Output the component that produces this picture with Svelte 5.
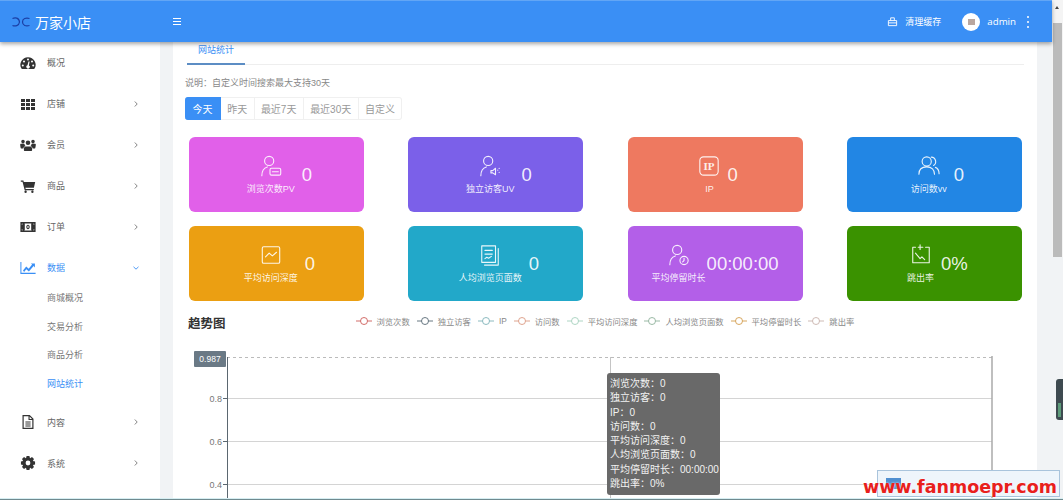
<script>
  const gear = () => {
    let d = '';
    const teeth = 8;
    for (let i = 0; i < teeth; i++) {
      const a = (i / teeth) * Math.PI * 2;
      const w = Math.PI / teeth;
      const pts = [
        [a - w * 0.95, 5.3],
        [a - w * 0.5, 7.2],
        [a + w * 0.5, 7.2],
        [a + w * 0.95, 5.3]
      ];
      for (const [t, r] of pts) {
        d += `${d ? 'L' : 'M'}${(8 + Math.cos(t) * r).toFixed(2)} ${(8 + Math.sin(t) * r).toFixed(2)}`;
      }
    }
    return d + 'zM8 5.6a2.4 2.4 0 1 0 0 4.8a2.4 2.4 0 0 0 0-4.8z';
  };

  const navIcons = {
    dash: 'M8 2.2a7.6 7.6 0 0 0-6.6 11.4c.2.3.4.4.7.4h11.8c.3 0 .5-.1.7-.4A7.6 7.6 0 0 0 8 2.2zM8 3.6a1 1 0 1 1 0 2a1 1 0 0 1 0-2zM4 5.6a1 1 0 1 1 0 2a1 1 0 0 1 0-2zM12 5.6a1 1 0 1 1 0 2a1 1 0 0 1 0-2zM2.8 9.4a1 1 0 1 1 0 2a1 1 0 0 1 0-2zM13.2 9.4a1 1 0 1 1 0 2a1 1 0 0 1 0-2zM9.6 6.6L8.9 10.4a1.7 1.7 0 1 1-1.4-.1L8.5 6.4z',
    grid: 'M1 3h4v3H1zM6 3h4v3H6zM11 3h4v3h-4zM1 7h4v3H1zM6 7h4v3H6zM11 7h4v3h-4zM1 11h4v3H1zM6 11h4v3H6zM11 11h4v3h-4z',
    users: 'M8 3.4a2.3 2.3 0 1 1 0 4.6a2.3 2.3 0 0 1 0-4.6zM3 2.8a1.8 1.8 0 1 1 0 3.6a1.8 1.8 0 0 1 0-3.6zM13 2.8a1.8 1.8 0 1 1 0 3.6a1.8 1.8 0 0 1 0-3.6zM.2 7.2C.2 6.8 1 6.8 3 6.8c.7 0 1.2.1 1.5.2c0 .9.4 1.6 1 2.1c-1.3.4-2 1.3-2.1 2.5H1.2C.6 11.6.2 9 .2 7.2zM15.8 7.2c0-.4-.8-.4-2.8-.4c-.7 0-1.2.1-1.5.2c0 .9-.4 1.6-1 2.1c1.3.4 2 1.3 2.1 2.5h2.2c.6 0 1-2.6 1-4.4zM5.8 9.4h4.4c1.2 0 1.9 1 1.9 2.6v1c0 .6-.4 1-1 1H4.900c-.6 0-1-.4-1-1v-1c0-1.600.7-2.600 1.900-2.600z',
    cart: 'M.8 2.6h2.600l.4 1.400h11.400l-1.300 5.800H5.400l.3 1.200h8.100v1.200H4.700L2.500 3.800H.8zM5.600 12.600a1.200 1.200 0 1 1 0 2.400a1.200 1.200 0 0 1 0-2.400zM12.400 12.600a1.200 1.200 0 1 1 0 2.400a1.200 1.200 0 0 1 0-2.400z',
    money: 'M.4 3h15.200v10H.4zM3 4.800H1.800v1.200M13 4.800h1.200V6M1.800 10v1.200H3M14.200 10v1.200H13zM4.200 4.600c.6 0 .6.500.6.900v5c0 .4 0 .9-.6.900h7.600c-.6 0-.6-.5-.6-.9v-5c0-.4 0-.9.6-.9zM8 5.800c1.100 0 1.700 1 1.700 2.200s-.6 2.200-1.700 2.200s-1.700-1-1.700-2.200s.6-2.200 1.700-2.200zM8 6.800c-.4 0-.6.500-.6 1.200s.2 1.200.6 1.200s.6-.5.6-1.200s-.2-1.200-.6-1.200z',
    chart: 'M.4 2h1v10.800h14.200v1.200H.4zM3 10.400l3.200-4l2.500 2.300l3.400-4.100l-1.300-1.200h4.100v4l-1.300-1.300l-4.700 5.500l-2.600-2.400l-2.200 2.700z',
    file: 'M2.500 1h7.200l3.800 3.800V15h-11zM3.700 2.200v11.600h8.600V6H8.500V2.200zM9.600 2.500v2.400H12zM5.400 7.600h5.200v1H5.400zM5.400 9.500h5.200v1H5.400zM5.400 11.400h5.200v1H5.400z',
    gear: gear()
  };

  const nav = [
    { label: '概况', icon: 'dash' },
    { label: '店铺', icon: 'grid', more: true },
    { label: '会员', icon: 'users', more: true },
    { label: '商品', icon: 'cart', more: true },
    { label: '订单', icon: 'money', more: true },
    { label: '数据', icon: 'chart', more: true, open: true, children: ['商城概况', '交易分析', '商品分析', '网站统计'] },
    { label: '内容', icon: 'file', more: true },
    { label: '系统', icon: 'gear', more: true }
  ];

  const ranges = ['今天', '昨天', '最近7天', '最近30天', '自定义'];

  const person = 'M5 6.500a5 5 0 1 1 10 0a5 5 0 0 1-10 0zM2 22.500c0-5 2.800-8.500 6-9.500';
  const stats = [
    { label: '浏览次数PV', value: '0', color: '#e160e9', icon: person + 'M12.500 14.500h8.500a1.600 1.600 0 0 1 1.600 1.600v4.300a1.600 1.600 0 0 1-1.600 1.600h-8.500a1.600 1.600 0 0 1-1.600-1.600v-4.300a1.600 1.600 0 0 1 1.600-1.600zM13.500 18.300h6.500' },
    { label: '独立访客UV', value: '0', color: '#7b60e9', icon: person + 'M13 17h2l3-2.500v7L15 19.500h-2zM20.500 16.500v.1M22 14.500v.1M22 19v.1' },
    { label: 'IP', value: '0', color: '#ee7960', icon: 'M6 2h12a4 4 0 0 1 4 4v12a4 4 0 0 1-4 4H6a4 4 0 0 1-4-4V6a4 4 0 0 1 4-4z', text: 'IP' },
    { label: '访问数vv', value: '0', color: '#2286e4', icon: 'M4.500 7a5 5 0 1 1 10 0a5 5 0 0 1-10 0zM1 21c0-5 3-8 8.500-8s8.500 3 8.500 8M14.500 2.300a5 5 0 0 1 2.500 9.200M19 13.500c2.500 1 4 3.500 4 7' },
    { label: '平均访问深度', value: '0', color: '#eb9f12', icon: 'M4 3h16a1.500 1.500 0 0 1 1.500 1.500v15a1.500 1.500 0 0 1-1.500 1.500H4a1.500 1.500 0 0 1-1.500-1.500v-15A1.500 1.500 0 0 1 4 3zM6 14l4-4l3.500 3l4.500-4' },
    { label: '人均浏览页面数', value: '0', color: '#22a8c9', icon: 'M3 2h15v18H3zM21 5v18H6M6.500 7h8M6.500 11h8M6.500 16l2-1.500l2 1l3-2' },
    { label: '平均停留时长', value: '00:00:00', color: '#b35fe8', long: true, icon: person + 'M13 18a4.500 4.500 0 1 0 9 0a4.500 4.500 0 0 0-9 0zM17.500 15.500v2.500l-1.500 1.500' },
    { label: '跳出率', value: '0%', color: '#3a9200', icon: 'M6 3.500H3v17h18v-17h-4M9 3.500h5M11 1v5M6 10l5 6l2-2l3 3M11 20.500h-1' }
  ];

  const legend = [
    { label: '浏览次数', color: '#c23531' },
    { label: '独立访客', color: '#2f4554' },
    { label: 'IP', color: '#61a0a8' },
    { label: '访问数', color: '#d48265' },
    { label: '平均访问深度', color: '#91c7ae' },
    { label: '人均浏览页面数', color: '#749f83' },
    { label: '平均停留时长', color: '#ca8622' },
    { label: '跳出率', color: '#bda29a' }
  ];

  const ticks = [
    { label: '0.8', y: 53.500 },
    { label: '0.6', y: 96.500 },
    { label: '0.4', y: 139.500 }
  ];

  const tooltip = [
    '浏览次数：0',
    '独立访客：0',
    'IP：0',
    '访问数：0',
    '平均访问深度：0',
    '人均浏览页面数：0',
    '平均停留时长：00:00:00',
    '跳出率：0%'
  ];
</script>

<div class="page">
  <header class="topbar">
    <div class="brand">
      <svg class="logo" width="18" height="10" viewBox="0 0 18 10">
        <path d="M.5 1.500C3 .5 7 .5 7.500 5C7 9 3 9.500.5 8.500M17.500 1.500C14 .5 10.500 1.500 10.500 5C10.500 8.500 14 9.500 17.500 8.500" />
      </svg>
      <span>万家小店</span>
    </div>
    <div class="burger"><i></i><i></i><i></i></div>
    <div class="top-right">
      <svg class="basket" width="11" height="11" viewBox="0 0 12 12">
        <path d="M1.500 5h9v5.500h-9zM4 5V2h4v3M1.500 7.500h9" />
      </svg>
      <span class="clear">清理缓存</span>
      <div class="avatar"><i></i></div>
      <span class="user">admin</span>
      <div class="dots"><i></i><i></i><i></i></div>
    </div>
  </header>

  <div class="body">
    <aside class="sidebar">
      {#each nav as item}
        <div class="nav-item" class:active={item.open}>
          <svg class="nav-icon" width="16" height="16" viewBox="0 0 16 16">
            <path fill-rule="evenodd" d={navIcons[item.icon]} />
          </svg>
          <span class="nav-label">{item.label}</span>
          {#if item.more}
            <svg class="chevron" width="6" height="6" viewBox="0 0 6 6">
              <path d={item.open ? 'M.5 1.800L3 4.200L5.500 1.800' : 'M1.800.5L4.200 3L1.800 5.500'} />
            </svg>
          {/if}
        </div>
        {#if item.children}
          <div class="sub-list">
            {#each item.children as child, i}
              <div class="sub-item" class:active={i === 3}>{child}</div>
            {/each}
          </div>
        {/if}
      {/each}
    </aside>

    <main class="content">
      <div class="tabs"><span class="tab">网站统计</span></div>
      <p class="note">说明：自定义时间搜索最大支持30天</p>
      <div class="ranges">
        {#each ranges as range, i}
          <span class="range" class:on={i === 0}>{range}</span>
        {/each}
      </div>

      <div class="stats">
        {#each stats as s}
          <div class="stat" class:long={s.long} style="background: {s.color}">
            <div class="stat-main">
              <svg width="22" height="22" viewBox="0 0 24 24">
                <path d={s.icon} />
                {#if s.text}
                  <text class="icon-text" x="12" y="16.500">{s.text}</text>
                {/if}
              </svg>
              <span class="stat-label">{s.label}</span>
            </div>
            <span class="stat-value">{s.value}</span>
          </div>
        {/each}
      </div>

      <div class="trend-head">
        <h3>趋势图</h3>
        <div class="legend">
          {#each legend as l}
            <span class="legend-item">
              <svg width="16" height="10" viewBox="0 0 16 10" style="stroke: {l.color}">
                <path d="M0 5h16" />
                <circle cx="8" cy="5" r="3.500" />
              </svg>
              {l.label}
            </span>
          {/each}
        </div>
      </div>

      <div class="chart">
        <svg width="840" height="160" viewBox="0 0 840 160">
          <line class="grid" x1="42" x2="807" y1="12.500" y2="12.500" stroke-dasharray="3 3" />
          {#each ticks as t}
            <line class="grid solid" x1="42" x2="807" y1={t.y} y2={t.y} />
            <line class="axis" x1="38" x2="42" y1={t.y} y2={t.y} />
            <text class="tick" x="37" y={t.y + 3.500}>{t.label}</text>
          {/each}
          <line class="axis" x1="42.500" x2="42.500" y1="12" y2="160" />
          <line class="edge" x1="807" x2="807" y1="11" y2="160" />
          <line class="pointer" x1="425.500" x2="425.500" y1="12" y2="160" />
          <rect class="tag" x="9" y="6" width="32" height="16" rx="1" />
          <text class="tag-text" x="25" y="17">0.987</text>
        </svg>
        <div class="tooltip">
          {#each tooltip as row}
            <div>{row}</div>
          {/each}
        </div>
      </div>
    </main>

    <div class="gutter"><span class="pill"><i></i></span></div>

    <div class="scrollbar">
      <i class="arrow"></i>
      <i class="thumb"></i>
    </div>
  </div>

  <div class="window-edge"></div>

  <div class="stamp"><i></i></div>
  <div class="stamp-text">www.fanmoepr.com</div>
</div>

<style>
  :global(body) {
    margin: 0;
    background: #fff;
    overflow: hidden;
  }

  .page {
    position: relative;
    width: 1063px;
    height: 500px;
    display: flex;
    flex-direction: column;
    overflow: hidden;
    font-family: 'Liberation Sans', 'Noto Sans CJK SC', sans-serif;
    color: #666;
  }

  .topbar {
    position: relative;
    z-index: 2;
    flex: none;
    height: 41px;
    margin-right: 11px;
    border-top: 1px solid #62a6f5;
    display: flex;
    align-items: center;
    background: #3a8ff5;
    box-shadow: 0 2px 4px rgba(0, 0, 0, 0.35);
    color: #fff;
  }

  .brand {
    width: 160px;
    display: flex;
    align-items: center;
    gap: 5px;
    padding-left: 12px;
    box-sizing: border-box;
    font-size: 14px;
  }

  .logo path {
    fill: none;
    stroke: #1b3fa5;
    stroke-width: 1.2;
  }

  .burger {
    margin-left: 13px;
    display: flex;
    flex-direction: column;
    gap: 1.500px;
  }

  .burger i {
    display: block;
    width: 8px;
    height: 1.500px;
    background: #fff;
  }

  .top-right {
    margin-left: auto;
    display: flex;
    align-items: center;
  }

  .basket path {
    fill: none;
    stroke: #fff;
    stroke-width: 1;
  }

  .clear {
    margin-left: 7px;
    font-size: 9px;
  }

  .avatar {
    margin-left: 21px;
    width: 18px;
    height: 18px;
    border-radius: 50%;
    background: #fff;
    display: flex;
    align-items: center;
    justify-content: center;
  }

  .avatar i {
    width: 7px;
    height: 6px;
    background: #b9a7a0;
  }

  .user {
    margin-left: 7px;
    font-size: 9.700px;
    font-family: 'Open Sans', sans-serif;
  }

  .dots {
    margin: 0 23px 0 11px;
    display: flex;
    flex-direction: column;
    gap: 3px;
  }

  .dots i {
    display: block;
    width: 2px;
    height: 2px;
    border-radius: 50%;
    background: #fff;
  }

  .body {
    flex: 1;
    min-height: 0;
    display: flex;
    background: #f1f3f5;
  }

  .sidebar {
    flex: none;
    width: 160px;
    background: #fff;
    overflow: hidden;
  }

  .nav-item {
    height: 41px;
    display: flex;
    align-items: center;
    padding-left: 20px;
    font-size: 9px;
    color: #666;
  }

  .nav-icon {
    flex: none;
    fill: #333;
  }

  .nav-label {
    margin-left: 11px;
  }

  .chevron {
    margin-left: 68px;
    fill: none;
    stroke: #777;
    stroke-width: 0.9;
  }

  .nav-item.active {
    color: #3a8ff5;
  }

  .nav-item.active .nav-icon {
    fill: #3a8ff5;
  }

  .nav-item.active .chevron {
    stroke: #3a8ff5;
  }

  .sub-list {
    margin: -4px 0 3px;
  }

  .sub-item {
    height: 28.700px;
    line-height: 28.700px;
    padding-left: 47px;
    font-size: 9px;
    color: #777;
  }

  .sub-item.active {
    color: #3a8ff5;
  }

  .content {
    flex: none;
    position: relative;
    width: 864px;
    margin-left: 13px;
    box-sizing: border-box;
    padding-left: 12px;
    padding-right: 13px;
    background: #fff;
    overflow: hidden;
  }

  .tabs {
    height: 22px;
    margin-left: 2px;
    border-bottom: 1px solid #eee;
  }

  .tab {
    display: block;
    box-sizing: border-box;
    width: 58px;
    height: 23px;
    padding-top: 2px;
    text-align: center;
    font-size: 9px;
    line-height: 12px;
    color: #3a8ff5;
    border-bottom: 2px solid #5c8dc4;
  }

  .note {
    margin: 12px 0 0;
    font-size: 9px;
    line-height: 12px;
    color: #888;
  }

  .ranges {
    display: inline-flex;
    margin-top: 8px;
    vertical-align: top;
  }

  .range {
    height: 23px;
    line-height: 23px;
    padding: 0 6.500px 0 6.200px;
    font-size: 10px;
    color: #999;
    border: 1px solid #f0f0f0;
    border-left: 0;
    box-sizing: border-box;
  }

  .range:last-child {
    border-radius: 0 3px 3px 0;
  }

  .range.on {
    padding: 0 7.500px;
    color: #fff;
    background: #3a8ff5;
    border-color: #3a8ff5;
    border-radius: 3px 0 0 3px;
  }

  .stats {
    display: grid;
    grid-template-columns: repeat(4, 175px);
    column-gap: 44.300px;
    row-gap: 14px;
    margin: 17px 0 0 4px;
  }

  .stat {
    height: 75px;
    border-radius: 6px;
    display: flex;
    align-items: center;
    justify-content: center;
    gap: 7px;
    padding-left: 6px;
    box-sizing: border-box;
    color: rgba(255, 255, 255, 0.9);
  }

  .stat.long {
    gap: 1px;
    padding-left: 0;
  }

  .stat-main {
    display: flex;
    flex-direction: column;
    align-items: center;
    gap: 7px;
  }

  .stat-main svg {
    fill: none;
    stroke: rgba(255, 255, 255, 0.9);
    stroke-width: 1.200;
    stroke-linecap: round;
    stroke-linejoin: round;
  }

  .icon-text {
    font-family: 'Liberation Serif', serif;
    font-size: 12px;
    font-weight: 700;
    text-anchor: middle;
    fill: rgba(255, 255, 255, 0.9);
    stroke: none;
  }

  .stat-label {
    font-size: 9px;
    line-height: 11px;
    white-space: nowrap;
  }

  .stat-value {
    font-size: 18.500px;
    line-height: 22px;
  }

  .trend-head {
    display: flex;
    align-items: center;
    height: 18px;
    margin: 12px 0 0 3px;
  }

  .trend-head h3 {
    margin: 0;
    font-size: 12.500px;
    font-weight: 700;
    color: #333;
  }

  .legend {
    display: flex;
    gap: 7px;
    margin: -2px 0 0 130px;
  }

  .legend-item {
    display: flex;
    align-items: center;
    gap: 5px;
    font-size: 8.300px;
    color: #888;
    white-space: nowrap;
  }

  .legend-item svg {
    fill: #fff;
    stroke-width: 0.900;
    opacity: 0.8;
  }

  .chart {
    position: relative;
    margin-top: 14px;
  }

  .chart svg {
    display: block;
  }

  .grid {
    stroke: #bbb;
    stroke-width: 1;
  }

  .grid.solid {
    stroke: #d4d4d4;
  }

  .axis {
    stroke: #5b6770;
    stroke-width: 1;
  }

  .edge {
    stroke: #aaa;
    stroke-width: 1.500;
  }

  .pointer {
    stroke: #c4c4c4;
    stroke-width: 1;
  }

  .tick {
    font-size: 9px;
    fill: #777;
    text-anchor: end;
  }

  .tag {
    fill: #6a7985;
  }

  .tag-text {
    font-size: 8.500px;
    fill: #fff;
    text-anchor: middle;
  }

  .tooltip {
    position: absolute;
    left: 422px;
    top: 28px;
    width: 113px;
    height: 122px;
    box-sizing: border-box;
    padding: 4px 3px;
    border-radius: 3px;
    background: #696969;
    color: #f2f2f2;
    font-size: 10px;
    line-height: 14.300px;
    white-space: nowrap;
  }

  .gutter {
    position: relative;
    flex: 1;
  }

  .pill {
    position: absolute;
    left: 19px;
    top: 337px;
    width: 7px;
    height: 41px;
    border-radius: 3px 0 0 3px;
    background: #3e4a50;
  }

  .pill i {
    position: absolute;
    left: 2px;
    top: 24px;
    width: 3px;
    height: 14px;
    background: #5d9b7a;
  }

  .scrollbar {
    position: absolute;
    top: 0;
    right: 0;
    width: 11px;
    height: 257px;
    background: #f4f4f4;
  }

  .arrow {
    position: absolute;
    left: 3px;
    top: 6px;
    border: 2.500px solid transparent;
    border-top: 0;
    border-bottom: 3px solid #444;
  }

  .thumb {
    position: absolute;
    left: 1px;
    right: 1px;
    top: 23px;
    bottom: 0;
    background: #bbb;
  }

  .window-edge {
    flex: none;
    height: 2px;
    border-top: 1px solid #d6eef2;
    box-sizing: border-box;
    background: #6f8a8f;
  }

  .stamp {
    position: absolute;
    left: 877px;
    top: 470px;
    width: 183px;
    height: 27px;
    box-sizing: border-box;
    border: 1px solid #a9c4dc;
    background: #eef5fb;
  }

  .stamp i {
    position: absolute;
    left: 8px;
    top: 7px;
    width: 15px;
    height: 11px;
    background: #4f8fd0;
  }

  .stamp-text {
    position: absolute;
    left: 863px;
    top: 475px;
    font-family: 'DejaVu Sans', sans-serif;
    font-size: 17.500px;
    line-height: 24px;
    font-weight: 700;
    color: #e8201c;
    text-shadow: 0 0 2px #fff;
    white-space: nowrap;
  }
</style>
